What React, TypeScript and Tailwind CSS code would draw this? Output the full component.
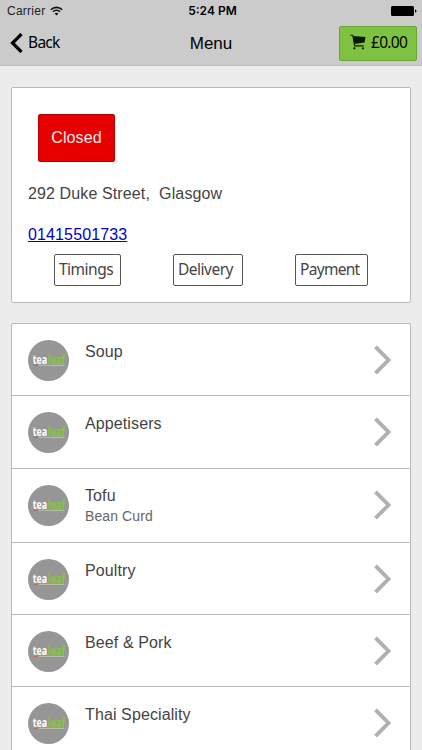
interface Category {
  name: string;
  description?: string;
}

const categories: Category[] = [
  { name: 'Soup' },
  { name: 'Appetisers' },
  { name: 'Tofu', description: 'Bean Curd' },
  { name: 'Poultry' },
  { name: 'Beef & Pork' },
  { name: 'Thai Speciality' },
];

function WifiIcon() {
  return (
    <svg width="13" height="11" viewBox="0 0 13 11" fill="none" stroke="#111" strokeWidth="1.6">
      <path d="M0.8 3.7a8.1 8.1 0 0 1 11.4 0" />
      <path d="M2.9 5.8a5.1 5.1 0 0 1 7.2 0" />
      <path d="M6.5 9.6L4.6 7.6a2.7 2.7 0 0 1 3.8 0z" fill="#111" stroke="none" />
    </svg>
  );
}

function StatusBar() {
  return (
    <div className="grid h-[22px] grid-cols-3 items-center pl-[7px] pr-[5px] text-[12px] text-[#222]">
      <div className="flex items-center gap-[5px]">
        <span className="tracking-[0.25px]">Carrier</span>
        <WifiIcon />
      </div>
      <div className="pl-px text-center font-['Inter',sans-serif] text-[12px] font-semibold text-black">5:24 PM</div>
      <div className="flex justify-end">
        <svg width="26" height="10" viewBox="0 0 26 10">
          <rect width="23" height="10" rx="1.5" fill="#000" />
          <path d="M24 3.5a1.5 1.5 0 0 1 0 3z" fill="#000" />
        </svg>
      </div>
    </div>
  );
}

function CartIcon() {
  return (
    <svg className="mt-[7px] shrink-0" width="16" height="16" viewBox="0 0 16 16" fill="none" stroke="#0c1a05">
      <path d="M0.3 1.2H2.7L4.7 11.9H13.6" strokeWidth="1.1" />
      <path d="M3 2L15.5 3L14.6 8.6L4.3 10z" fill="#0c1a05" stroke="none" />
      <circle cx="4.3" cy="14.3" r="1.1" fill="#0c1a05" stroke="none" />
      <circle cx="13" cy="14.3" r="1.1" fill="#0c1a05" stroke="none" />
    </svg>
  );
}

function NavBar() {
  return (
    <div className="grid h-[43px] grid-cols-3 font-['Noto_Sans',sans-serif] text-black">
      <button className="flex items-start gap-[5px] pl-[10px] text-left">
        <svg className="mt-[11px]" width="13" height="20" viewBox="0 0 13 20" fill="none" stroke="#000" strokeWidth="3.2">
          <path d="M11.5 1L2.5 10L11.5 19" />
        </svg>
        <span className="mt-2 text-[15.5px] leading-6 tracking-[-0.7px]">Back</span>
      </button>
      <h1 className="pt-[10px] text-center font-['Liberation_Sans',sans-serif] text-[17px] leading-6">Menu</h1>
      <div className="flex justify-end pr-[5px] pt-1">
        <button className="flex h-[35px] w-[78px] items-start rounded-[2px] border border-[#6aa536] bg-[#7fc241] pl-[10px]">
          <CartIcon />
          <span className="ml-[5px] mt-[3px] text-[15.5px] leading-6 tracking-[-0.7px]">£0.00</span>
        </button>
      </div>
    </div>
  );
}

function InfoCard() {
  return (
    <section className="h-[216px] rounded-[2px] border border-[#b9b9b9] bg-white px-4 pt-[26px]">
      <div className="ml-[10px] flex h-12 w-[77px] items-center justify-center rounded-[2px] border border-[#bb0000] bg-[#e60000] text-base tracking-[0.1px] text-[#ffeaea]">
        Closed
      </div>
      <p className="mt-5 whitespace-pre text-base leading-6 tracking-[0.12px]">292 Duke Street,  Glasgow</p>
      <a href="tel:01415501733" className="mt-[17px] block w-fit text-base leading-6 tracking-[0.13px] text-[#0000cc] underline">
        01415501733
      </a>
      <div className="ml-[26px] mt-[7px] flex font-['Noto_Sans',sans-serif] text-[15.5px] leading-6 tracking-[-0.5px]">
        <button className="h-8 w-[67px] rounded-[2px] border border-[#555] pb-[2px] pl-1 text-left">Timings</button>
        <button className="ml-[52px] h-8 w-[70px] rounded-[2px] border border-[#555] pb-[2px] pl-1 text-left">Delivery</button>
        <button className="ml-[52px] h-8 w-[73px] rounded-[2px] border border-[#555] pb-[2px] pl-1 text-left tracking-[-0.7px]">Payment</button>
      </div>
    </section>
  );
}

function Logo() {
  return (
    <svg width="41" height="41" viewBox="0 0 41 41" className="shrink-0 font-['Open_Sans',sans-serif] text-[12px] font-bold">
      <circle cx="20.5" cy="20.5" r="20.5" fill="#969696" />
      <text transform="translate(4.7 23.7) scale(0.74 1)" fill="#fff">tea</text>
      <text transform="translate(20 23.7) scale(0.75 1)" fill="#85c541" stroke="#85c541" strokeWidth="0.3">leaf</text>
      <path d="M5.5 25.4h5" stroke="#b46a6a" strokeWidth="1" />
      <path d="M10.5 25.4h26" stroke="#b9c0b2" strokeWidth="1" />
    </svg>
  );
}

function CategoryRow({ category }: { category: Category }) {
  return (
    <li className="flex h-[72.3px] border-b border-[#b9b9b9] pl-4 pr-[19px] pt-4 has-[p]:h-[74px]">
      <Logo />
      <div className="ml-4 flex-1 has-[p]:-mt-px">
        <h2 className="text-base leading-6 tracking-[0.11px]">{category.name}</h2>
        {category.description && (
          <p className="text-sm leading-[17px] tracking-[0.1px] text-[#666]">{category.description}</p>
        )}
      </div>
      <svg className="mt-[5px]" width="17" height="30" viewBox="0 0 17 30" fill="none" stroke="#b0b0b0" strokeWidth="3.8">
        <path d="M1.5 1.8L14.5 15L1.5 28.2" />
      </svg>
    </li>
  );
}

export default function App() {
  return (
    <div className="h-[750px] overflow-hidden bg-[#ececec] font-['Liberation_Sans',sans-serif] text-[#444]">
      <header className="h-[66px] border-b border-[#bdbdbd] bg-[#cbcbcb]">
        <StatusBar />
        <NavBar />
      </header>
      <main className="flex flex-col gap-5 pl-[11px] pr-[11px] pt-[21px]">
        <InfoCard />
        <ul className="rounded-[2px] border border-[#b9b9b9] bg-white">
          {categories.map((category) => (
            <CategoryRow key={category.name} category={category} />
          ))}
        </ul>
      </main>
    </div>
  );
}
